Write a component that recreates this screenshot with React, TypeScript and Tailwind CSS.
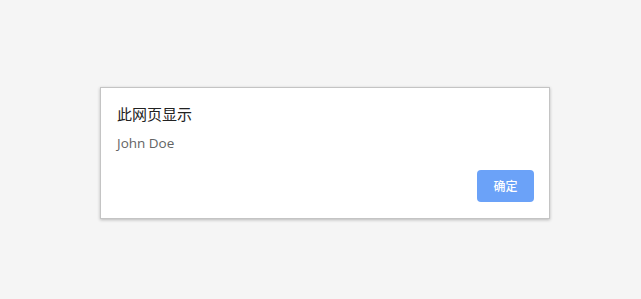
import React from "react";

export default function App() {
  return (
    <div
      className="w-full h-[299px] bg-[#f5f5f5] pt-[87px] pl-[100px]"
      style={{ fontFamily: '"Noto Sans", "Noto Sans CJK SC", sans-serif' }}
    >
      <div className="w-[450px] h-[132px] bg-white border border-[#c4c4c4] shadow-[0_1px_3px_rgba(0,0,0,0.25)] flex flex-col pt-[16px] pl-4 pr-[15px]">
        <div className="text-[15px] leading-[20px] text-[#222222] font-['Noto_Sans_CJK_SC',sans-serif]">
          此网页显示
        </div>
        <div className="mt-[9px] text-[13.5px] leading-[20px] text-[#646464] font-['Open_Sans',sans-serif]">
          John Doe
        </div>
        <div className="flex justify-end mt-[17px]">
          <button className="w-[57px] h-[32px] rounded-[4px] bg-[#6ba2f8] text-white text-[12px] font-medium font-['Noto_Sans_CJK_SC',sans-serif]">
            确定
          </button>
        </div>
      </div>
    </div>
  );
}
